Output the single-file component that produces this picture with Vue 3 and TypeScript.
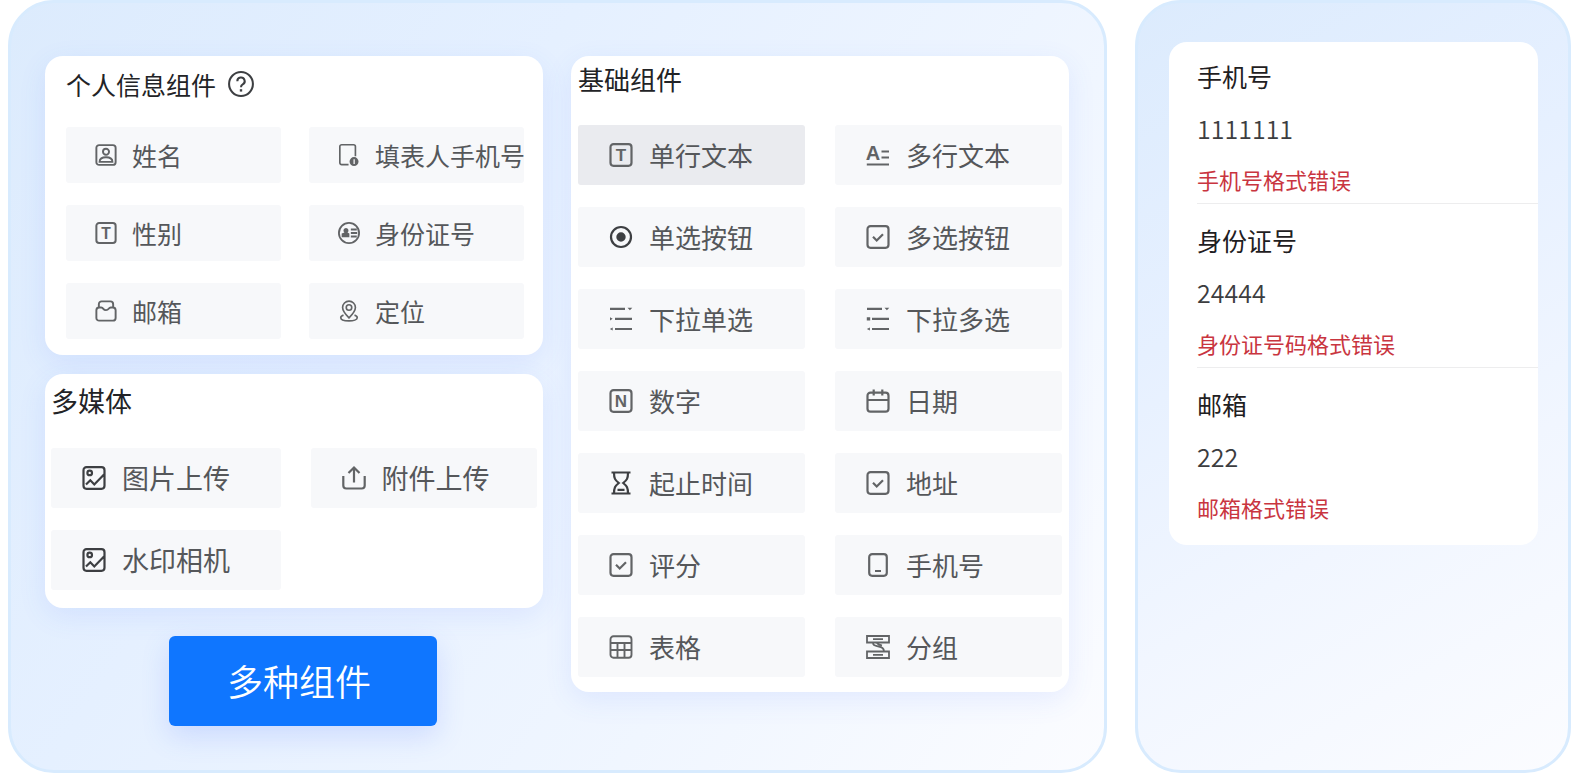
<script setup lang="ts">
interface Glyph {
  text: string
  x: number
  y: number
  size: number
}

interface Icon {
  line: string
  solid?: string
  glyph?: Glyph
  weight?: number
  dark?: boolean
}

interface Tile {
  label: string
  icon: string
  active?: boolean
}

interface Field {
  id: string
  label: string
  value: string
  error: string
}

const box = 'M4.5 1.2h15a3 3 0 0 1 3 3v15.600a3 3 0 0 1-3 3h-15a3 3 0 0 1-3-3V4.200a3 3 0 0 1 3-3z'

const icons: Record<string, Icon> = {
  help: {
    line: 'M12 1a11 11 0 1 1 0 22a11 11 0 0 1 0-22z M8.600 9.400a3.400 3.400 0 1 1 5 3c-1.100.600-1.600 1.300-1.600 2.500',
    solid: 'M10.900 16.800h2.200v2.200h-2.200z',
    weight: 1.9,
    dark: true,
  },
  person: {
    line: `${box} M12 5.200a3.300 3.300 0 1 1 0 6.600a3.300 3.300 0 0 1 0-6.600z M5 19.500c0-3.500 2.600-5 7-5s7 1.500 7 5z`,
    weight: 2.1,
  },
  phoneInfo: {
    line: 'M11.500 22.500H4a2 2 0 0 1-2-2V2.800a2 2 0 0 1 2-2h13a2 2 0 0 1 2 2v10.500',
    solid: 'M17.500 14.300a4.900 4.900 0 1 1 0 9.800a4.900 4.900 0 0 1 0-9.800z M16.900 16.600v5.200h1.400v-5.200z',
    weight: 1.8,
  },
  text: { line: box, glyph: { text: 'T', x: 12, y: 18.2, size: 17 } },
  idCard: {
    line: 'M12 1a11 11 0 1 1 0 22a11 11 0 0 1 0-22z M14 8.200h6.500 M14 12h7 M14 15.800h6.500',
    solid: 'M8.700 6.500a2.800 2.800 0 0 1 1.700 5l2 1v4H4v-4l3-1a2.800 2.800 0 0 1 1.700-5z',
    weight: 2,
  },
  mail: {
    line: 'M4.200 8.200V4.500a3 3 0 0 1 3-3h9.600a3 3 0 0 1 3 3v3.700 M1.500 11a3 3 0 0 1 3-2.800h2.300c1.200 0 1.700.600 2.300 1.400c1.400 1.900 4.400 1.900 5.800 0c.600-.800 1.100-1.400 2.300-1.400h2.300a3 3 0 0 1 3 2.800v8.500a3 3 0 0 1-3 3h-15a3 3 0 0 1-3-3z',
    weight: 2.1,
  },
  pin: {
    line: 'M12 19.500c-4.500-4.500-7-7.800-7-11.300a7 7 0 1 1 14 0c0 3.500-2.500 6.800-7 11.300z M12 5.200a3 3 0 1 1 0 6a3 3 0 0 1 0-6z M6 16.500c-2 .700-3 1.600-3 2.800c0 2.100 4 3.500 9 3.500s9-1.400 9-3.500c0-1.200-1-2.100-3-2.800',
    weight: 1.8,
  },
  image: {
    line: `${box} M7.700 4.600a2.300 2.300 0 1 1 0 4.600a2.300 2.300 0 0 1 0-4.600z M4 18.500l4.300-4.200 4 4.200L22 8.500`,
    weight: 2.2,
    dark: true,
  },
  upload: {
    line: 'M12 16.500V2 M6.500 7L12 1.500 17.500 7 M1.300 10v9.500a3 3 0 0 0 3 3h15.400a3 3 0 0 0 3-3V10',
  },
  multiline: {
    line: 'M15.500 8.500H23 M15.500 14.500H23 M.800 21.500H23',
    glyph: { text: 'A', x: 6.9, y: 16.5, size: 20 },
  },
  radio: {
    line: 'M12 2a10 10 0 1 1 0 20a10 10 0 0 1 0-20z',
    solid: 'M12 7.300a4.700 4.700 0 1 1 0 9.400a4.700 4.700 0 0 1 0-9.400z',
    dark: true,
  },
  check: { line: `${box} M7 11.800l3.700 3.700 6.300-6.300` },
  dropdown: {
    line: 'M1 1.800h15 M6 11.800h17 M6 22h17',
    solid: 'M18.500.800h4.800l-2.400 2.400z M1 10.200l2.700 1.600L1 13.400z M3.700 20.400v3.200L.800 22z',
  },
  dropdownMulti: {
    line: 'M1 1.800h15 M6 11.800h17 M6 22h17',
    solid: 'M18.500.800h4.800l-2.400 2.400z M.800 10.200h3.400v3.200H.800z M3.900 20.400v3.200L.800 22z',
  },
  number: { line: box, glyph: { text: 'N', x: 12, y: 18, size: 17 } },
  calendar: {
    line: 'M4.500 3.700h15a3 3 0 0 1 3 3v13a3 3 0 0 1-3 3h-15a3 3 0 0 1-3-3v-13a3 3 0 0 1 3-3z M1.500 11h21 M7.700.500v6 M16.300.500v6',
  },
  hourglass: {
    line: 'M2.500 1.500h19 M2.500 22.500h19 M5 1.500c0 6 1 7.500 4.800 10.500C6 15 5 17 5 22.500 M19 1.500c0 6-1 7.500-4.800 10.500C18 15 19 17 19 22.500 M8.500 18.800h7',
    weight: 2.2,
    dark: true,
  },
  phone: {
    line: 'M6.200 1.200h11.600a3 3 0 0 1 3 3v15.600a3 3 0 0 1-3 3H6.200a3 3 0 0 1-3-3V4.200a3 3 0 0 1 3-3z M9 18h6',
  },
  table: {
    line: `${box} M1.500 8h21 M1.500 15h21 M8.500 8v14.500 M15.500 8v14.500`,
    weight: 1.9,
  },
  group: {
    line: 'M1 1h22v6.500H1z M1 16.500h22V23H1z M7 4.200h10 M7 19.800h10 M7 7.500c0 3 1.500 3 5 3.800c4 .900 6 1.700 6 5.200 M11 7.500c0 2 2 2.200 5 3',
    weight: 1.8,
  },
}

const personal: Tile[] = [
  { label: '姓名', icon: 'person' },
  { label: '填表人手机号', icon: 'phoneInfo' },
  { label: '性别', icon: 'text' },
  { label: '身份证号', icon: 'idCard' },
  { label: '邮箱', icon: 'mail' },
  { label: '定位', icon: 'pin' },
]

const media: Tile[] = [
  { label: '图片上传', icon: 'image' },
  { label: '附件上传', icon: 'upload' },
  { label: '水印相机', icon: 'image' },
]

const basic: Tile[] = [
  { label: '单行文本', icon: 'text', active: true },
  { label: '多行文本', icon: 'multiline' },
  { label: '单选按钮', icon: 'radio' },
  { label: '多选按钮', icon: 'check' },
  { label: '下拉单选', icon: 'dropdown' },
  { label: '下拉多选', icon: 'dropdownMulti' },
  { label: '数字', icon: 'number' },
  { label: '日期', icon: 'calendar' },
  { label: '起止时间', icon: 'hourglass' },
  { label: '地址', icon: 'check' },
  { label: '评分', icon: 'check' },
  { label: '手机号', icon: 'phone' },
  { label: '表格', icon: 'table' },
  { label: '分组', icon: 'group' },
]

const groups = [
  { key: 'personal', title: '个人信息组件', tiles: personal, help: true },
  { key: 'media', title: '多媒体', tiles: media, help: false },
  { key: 'basic', title: '基础组件', tiles: basic, help: false },
]

const fields: Field[] = [
  { id: 'mobile', label: '手机号', value: '1111111', error: '手机号格式错误' },
  { id: 'identity', label: '身份证号', value: '24444', error: '身份证号码格式错误' },
  { id: 'email', label: '邮箱', value: '222', error: '邮箱格式错误' },
]
</script>

<template>
  <main class="page">
    <section class="panel library">
      <div
        v-for="group in groups"
        :key="group.key"
        class="card"
        :class="group.key"
      >
        <h2 class="title">
          {{ group.title }}
          <button v-if="group.help" class="help" type="button" aria-label="帮助">
            <svg class="icon dark" viewBox="0 0 24 24" aria-hidden="true">
              <path class="line" :d="icons.help.line" :stroke-width="icons.help.weight" />
              <path class="solid" :d="icons.help.solid" />
            </svg>
          </button>
        </h2>
        <div class="tiles">
          <button
            v-for="tile in group.tiles"
            :key="tile.label"
            class="tile"
            :class="{ active: tile.active }"
            type="button"
          >
            <svg
              class="icon"
              :class="{ dark: icons[tile.icon].dark }"
              viewBox="0 0 24 24"
              aria-hidden="true"
            >
              <path
                class="line"
                :d="icons[tile.icon].line"
                :stroke-width="icons[tile.icon].weight ?? 2.2"
              />
              <path
                v-if="icons[tile.icon].solid"
                class="solid"
                fill-rule="evenodd"
                :d="icons[tile.icon].solid"
              />
              <text
                v-if="icons[tile.icon].glyph"
                class="glyph"
                text-anchor="middle"
                :x="icons[tile.icon].glyph?.x"
                :y="icons[tile.icon].glyph?.y"
                :font-size="icons[tile.icon].glyph?.size"
              >{{ icons[tile.icon].glyph?.text }}</text>
            </svg>
            <span>{{ tile.label }}</span>
          </button>
        </div>
      </div>
      <button class="primary" type="button">多种组件</button>
    </section>

    <section class="panel preview">
      <form class="form" @submit.prevent>
        <div v-for="field in fields" :key="field.id" class="field">
          <label class="label" :for="field.id">{{ field.label }}</label>
          <input
            :id="field.id"
            class="value"
            type="text"
            :value="field.value"
            aria-invalid="true"
            :aria-describedby="`${field.id}-error`"
          />
          <p :id="`${field.id}-error`" class="error">{{ field.error }}</p>
        </div>
      </form>
    </section>
  </main>
</template>

<style>
body {
  background: #fff;
}
</style>

<style scoped>
.page,
.page * {
  box-sizing: border-box;
}

.page {
  display: grid;
  grid-template-columns: 1099fr 436fr;
  gap: 28px;
  padding-left: 8px;
  font-family: "Noto Sans CJK SC", "Noto Sans", sans-serif;
}

button,
input {
  margin: 0;
  border: 0;
  font-family: inherit;
}

button {
  cursor: pointer;
}

.panel {
  border: 3px solid #d8ebfe;
  border-radius: 46px;
}

.library {
  display: grid;
  grid-template-columns: 1fr 1fr;
  grid-template-rows: auto auto 1fr;
  grid-template-areas:
    "personal basic"
    "media basic"
    "action basic";
  column-gap: 28px;
  padding: 53px 35px 78px 34px;
  background: linear-gradient(125deg, #dcebfd 0%, #e5f0ff 35%, #f0f6ff 70%, #fbfcff 100%);
}

.card {
  border-radius: 18px;
  background: #fff;
  box-shadow: 0 8px 28px rgba(70, 110, 255, 0.1);
}

.personal {
  grid-area: personal;
  padding: 6px 19px 16px 21px;
}

.media {
  grid-area: media;
  margin-top: 19px;
  padding: 5px 6px 18px 6px;
}

.basic {
  grid-area: basic;
  padding: 1px 7px 15px;
}

.title {
  display: flex;
  align-items: center;
  gap: 12px;
  margin: 0;
  color: #222326;
  font-size: 26px;
  font-weight: 400;
  line-height: 44px;
}

.personal .title {
  font-size: 25px;
}

.media .title,
.media .tile {
  font-size: 27px;
}

.help {
  display: flex;
  padding: 0;
  background: none;
}

.help .icon {
  width: 26px;
  height: 26px;
}

.tiles {
  display: grid;
  grid-template-columns: 1fr 1fr;
  grid-auto-rows: 60px;
  gap: 22px 30px;
  margin-top: 24px;
}

.personal .tiles {
  grid-auto-rows: 56px;
  column-gap: 28px;
  margin-top: 21px;
}

.media .tiles {
  grid-template-columns: 229fr 226fr;
  margin-top: 25px;
}

.tile {
  display: flex;
  align-items: center;
  gap: 16px;
  min-width: 0;
  padding: 0 0 0 31px;
  border-radius: 3px;
  background: #f7f8fa;
  color: #55575a;
  font-size: 26px;
  line-height: 36px;
  white-space: nowrap;
}

.personal .tile {
  gap: 15px;
  padding-left: 29px;
  font-size: 25px;
}

.tile.active {
  background: #eaebef;
}

.icon {
  flex: none;
  width: 24px;
  height: 24px;
  overflow: visible;
  color: #626466;
}

.personal .tile .icon {
  width: 22px;
  height: 22px;
}

.icon.dark {
  color: #3d3f42;
}

.line {
  fill: none;
  stroke: currentColor;
}

.solid {
  fill: currentColor;
}

.glyph {
  fill: currentColor;
  font-family: "Liberation Sans", Arial, sans-serif;
  font-weight: 700;
}

.primary {
  grid-area: action;
  justify-self: center;
  align-self: start;
  margin: 28px 0 -34px 18px;
  padding: 18px 58px 20px;
  width: 268px;
  border-radius: 6px;
  background: #0f76ff;
  box-shadow: 0 10px 28px rgba(70, 110, 255, 0.18);
  color: #fff;
  font-size: 36px;
  font-weight: 350;
  line-height: 52px;
  text-align: left;
}

.preview {
  padding: 39px 30px 40px 31px;
  background: linear-gradient(150deg, #dcebfd 0%, #e6f0ff 35%, #f1f6ff 65%, #fbfcff 100%);
}

.form {
  padding: 8px 0 14px 28px;
  border-radius: 18px;
  background: #fff;
}

.field {
  padding-bottom: 2px;
  border-bottom: 1px solid #ededee;
}

.field + .field {
  margin-top: 10px;
}

.field:last-child {
  border-bottom: 0;
}

.label {
  display: block;
  color: #1f2022;
  font-size: 25px;
  line-height: 52px;
}

.value {
  display: block;
  width: 100%;
  height: 52px;
  padding: 0;
  background: none;
  color: #3c3d3f;
  font-size: 25px;
  font-weight: 350;
  outline: 0;
}

.error {
  margin: 0;
  padding-top: 3px;
  color: #c9353f;
  font-size: 22px;
  line-height: 44px;
}
</style>
